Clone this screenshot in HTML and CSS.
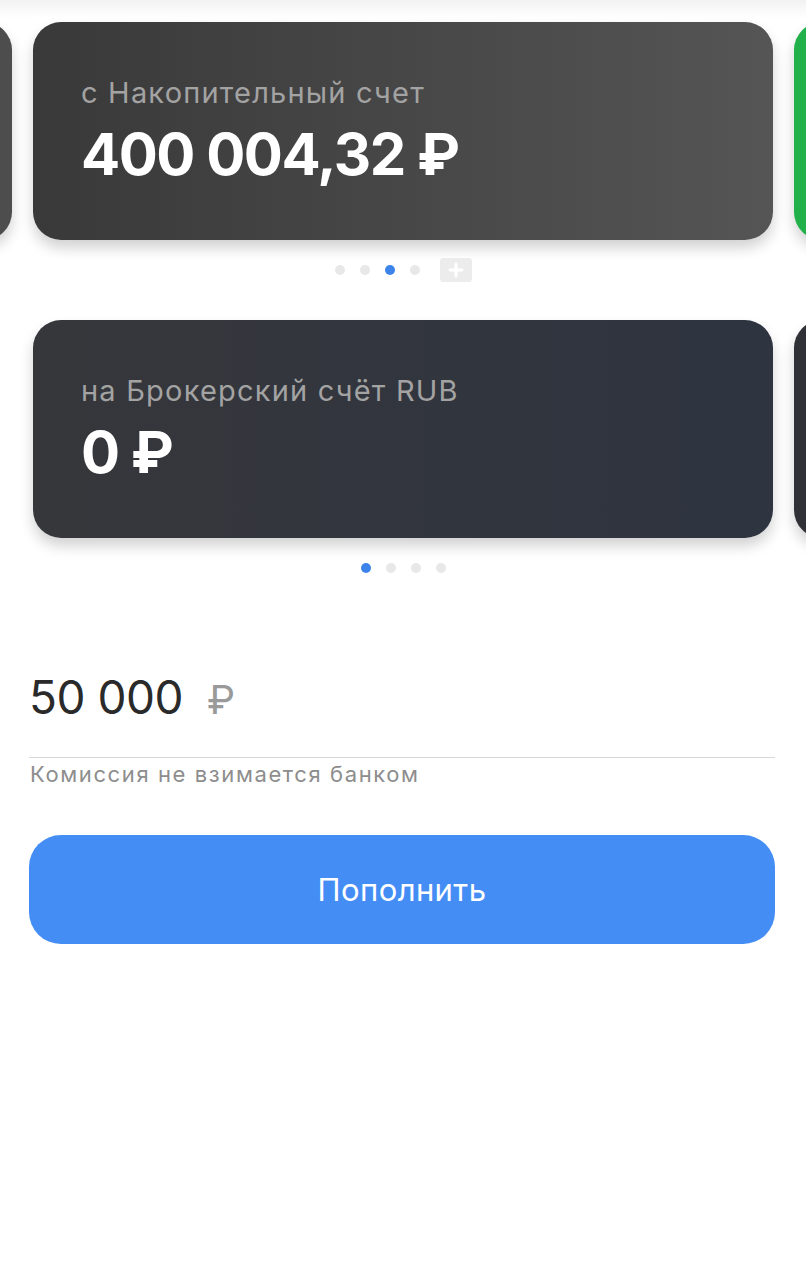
FILE: index.html
```html
<!DOCTYPE html>
<html lang="ru">
<head>
    <meta charset="UTF-8" />
    <meta name="viewport" content="width=device-width, initial-scale=1.0" />
    <link rel="stylesheet" href="styles.css">
</head>
<body>
    <main>
        <section class="carousel carousel--from">
            <div class="track">
                <div class="card card--grey-side"></div>
                <div class="card card--grey">
                    <p class="card__label">с Накопительный счет</p>
                    <p class="card__amount">400 004,32 ₽</p>
                </div>
                <div class="card card--green"></div>
            </div>
            <div class="dots">
                <span class="dot"></span>
                <span class="dot"></span>
                <span class="dot dot--active"></span>
                <span class="dot"></span>
                <span class="add">
                    <svg viewBox="0 0 32 24" width="32" height="24">
                        <path d="M16 6v12M10 12h12" stroke="#fff" stroke-width="3" stroke-linecap="round" />
                    </svg>
                </span>
            </div>
        </section>

        <section class="carousel carousel--to">
            <div class="track">
                <div class="card card--empty"></div>
                <div class="card card--dark">
                    <p class="card__label">на Брокерский счёт RUB</p>
                    <p class="card__amount">0 ₽</p>
                </div>
                <div class="card card--dark-side"></div>
            </div>
            <div class="dots">
                <span class="dot dot--active"></span>
                <span class="dot"></span>
                <span class="dot"></span>
                <span class="dot"></span>
            </div>
        </section>

        <section class="transfer">
            <div class="sum">
                <span class="sum__value">50 000</span>
                <span class="sum__currency">₽</span>
            </div>
            <p class="hint">Комиссия не взимается банком</p>
            <button class="submit">Пополнить</button>
        </section>
    </main>
</body>
</html>
```

FILE: styles.css
```css
html, body {
    margin: 0;
    padding: 0;
    background-color: #fff;
    font-family: Inter, 'Liberation Sans', sans-serif;
}
* {
    box-sizing: border-box;
}
main {
    width: 806px;
    overflow: hidden;
    background: linear-gradient(#f2f2f2, #fff 18px);
}
.carousel {
    display: flex;
    flex-direction: column;
    align-items: center;
}
.carousel--from {
    padding-top: 22px;
}
.carousel--to {
    padding-top: 38px;
}
.track {
    width: 806px;
    display: flex;
    justify-content: center;
    gap: 21px;
}
.card {
    flex: 0 0 740px;
    height: 218px;
    border-radius: 28px;
    padding: 54px 48px 0;
    box-shadow: 0 8px 14px rgba(0, 0, 0, 0.18);
}
.card--grey {
    background: linear-gradient(90deg, #393939, #555);
}
.card--grey-side {
    background: #4d4d4d;
}
.card--green {
    background: #22b04b;
}
.card--dark {
    background: linear-gradient(90deg, #36373b, #2e3440);
}
.card--dark-side {
    background: #2f3136;
}
.card--empty {
    visibility: hidden;
}
.card__label {
    margin: 0;
    color: #a3a3a3;
    font-size: 29px;
    line-height: 34px;
    letter-spacing: 1.2px;
}
.card__amount {
    margin: 12px 0 0;
    color: #fff;
    font-size: 58px;
    font-weight: 700;
    line-height: 64px;
    letter-spacing: -1.5px;
}
.dots {
    display: flex;
    align-items: center;
    gap: 15px;
    height: 24px;
    margin-top: 18px;
}
.dot {
    width: 10px;
    height: 10px;
    border-radius: 50%;
    background: #e8e8e8;
}
.dot--active {
    background: #3c84ea;
}
.add {
    display: flex;
    width: 32px;
    height: 24px;
    margin-left: 5px;
    border-radius: 3px;
    background: #ececec;
}
.transfer {
    padding: 79px 31px 0 29px;
}
.sum {
    display: flex;
    align-items: baseline;
    gap: 24px;
    height: 99px;
    padding-top: 10px;
    border-bottom: 1px solid #d8d8d8;
}
.sum__value {
    color: #2a2a2a;
    font-size: 46px;
    letter-spacing: -0.5px;
}
.sum__currency {
    color: #9a9a9a;
    font-size: 40px;
}
.hint {
    margin: 3px 0 0 1px;
    color: #8d8d8d;
    font-size: 22px;
    letter-spacing: 1.6px;
}
.submit {
    display: block;
    width: 746px;
    height: 109px;
    margin-top: 48px;
    border: none;
    border-radius: 32px;
    background-color: #448df5;
    color: #fff;
    font-family: Inter, 'Liberation Sans', sans-serif;
    font-size: 31px;
    letter-spacing: 0.4px;
}
```
